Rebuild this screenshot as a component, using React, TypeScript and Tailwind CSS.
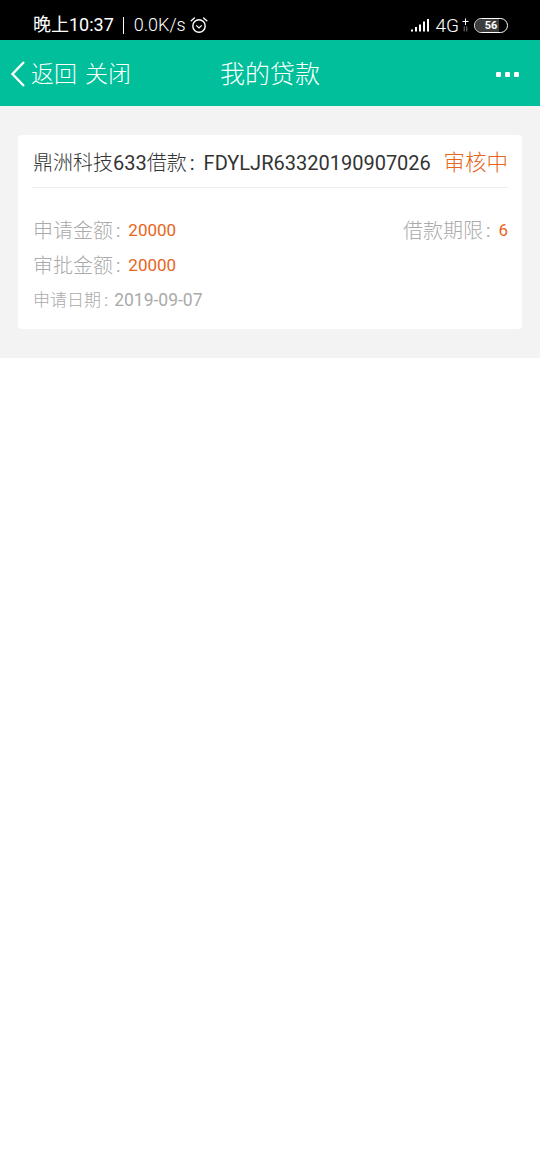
const font = { fontFamily: 'Roboto, "Noto Sans CJK SC", sans-serif' };

function AlarmIcon() {
    return (
        <svg width="18" height="18" viewBox="0 0 18 18" fill="none" stroke="#fff" strokeWidth="1.4">
            <circle cx="9" cy="10" r="6.2" />
            <path d="M6.2 9.4 9 12l2.8-2.6" strokeWidth="1.2" />
            <path d="M1.2 4.8 4.4 2M16.8 4.8 13.6 2" strokeLinecap="round" />
        </svg>
    );
}

function SignalIcon() {
    return (
        <svg width="20" height="14" viewBox="0 0 20 14" fill="#fff">
            <rect x="0" y="11.5" width="2" height="2" />
            <rect x="4" y="9" width="2" height="4.5" />
            <rect x="8" y="6.5" width="2" height="7" />
            <rect x="12" y="3.5" width="2" height="10" />
            <rect x="16" y="1" width="2" height="12.5" />
        </svg>
    );
}

function DataArrows() {
    return (
        <svg width="7" height="14" viewBox="0 0 7 14" fill="none" strokeWidth="1">
            <path d="M0.5 3.5h6M3.5 0.5v6.5" stroke="#fff" />
            <path d="M2.2 8.5v5M4.8 8.5v5" stroke="#777" />
        </svg>
    );
}

function Battery() {
    return (
        <div className="relative flex h-[15px] w-[34px] items-center justify-center overflow-hidden rounded-full border-[1.5px] border-white">
            <div className="absolute inset-y-0 left-0 w-[24px] bg-[#3d3d3d]" />
            <span className="relative text-[11px] font-bold leading-none text-white">56</span>
        </div>
    );
}

function Field({ label, value }: { label: string; value: string }) {
    return (
        <div className="flex items-center">
            <span className="text-[20px] font-light leading-none text-[#aaa]">{label}</span>
            <span className="ml-[3px] mr-[8px] text-[18px] leading-none text-[#aaa]">:</span>
            <span className="text-[17px] leading-none text-[#e8641b]">{value}</span>
        </div>
    );
}

export default function App() {
    return (
        <div className="min-h-[1170px] bg-white" style={font}>
            {/* status bar */}
            <div className="flex h-10 items-center justify-between bg-black pl-[33px] pr-[32px] pt-[10px] text-white">
                <div className="flex items-center">
                    <span className="text-[18px] leading-none">晚上10:37</span>
                    <span className="ml-[9px] h-[17px] w-px bg-white" />
                    <span className="ml-[10px] text-[18px] font-light leading-none">0.0K/s</span>
                    <span className="ml-[4px] flex"><AlarmIcon /></span>
                </div>
                <div className="flex items-center">
                    <SignalIcon />
                    <span className="ml-[4px] text-[19px] font-light leading-none">4G</span>
                    <span className="ml-[3px] flex"><DataArrows /></span>
                    <span className="ml-[5px] flex"><Battery /></span>
                </div>
            </div>

            {/* nav */}
            <div className="relative flex h-[66px] items-center bg-[#00bf9a] pl-[10px] pr-[21px] pt-[2px] text-white">
                <svg width="16" height="28" viewBox="0 0 16 28" fill="none" stroke="#fff" strokeWidth="2.4">
                    <path d="M14 2 2.5 14 14 26" />
                </svg>
                <span className="ml-[5px] text-[23px] font-light leading-none">返回</span>
                <span className="ml-[8px] text-[23px] font-light leading-none">关闭</span>
                <span className="absolute left-0 right-0 text-center text-[25px] font-light leading-none">我的贷款</span>
                <div className="ml-auto flex gap-[4px]">
                    <span className="h-[5px] w-[5px] rounded-[1px] bg-white" />
                    <span className="h-[5px] w-[5px] rounded-[1px] bg-white" />
                    <span className="h-[5px] w-[5px] rounded-[1px] bg-white" />
                </div>
            </div>

            {/* list */}
            <div className="bg-[#f3f3f3] px-[18px] py-[29px]">
                <div className="rounded-[4px] bg-white px-[14px] pb-[11px]">
                    <div className="flex h-[53px] items-center justify-between border-b border-[#eeeeee] pt-[4px]">
                        <div className="flex items-center whitespace-nowrap pl-px leading-none text-[#333]">
                            <span className="text-[20px] font-light">鼎洲科技</span>
                            <span className="text-[20px]">633</span>
                            <span className="text-[20px] font-light">借款</span>
                            <span className="ml-[3px] mr-[9px] text-[20px]">:</span>
                            <span className="text-[20px]">FDYLJR63320190907026</span>
                        </div>
                        <span className="whitespace-nowrap text-[21.5px] font-light leading-none text-[#e8641b]">审核中</span>
                    </div>
                    <div className="mt-[25px] flex h-[35px] items-center justify-between pl-px">
                        <Field label="申请金额" value="20000" />
                        <Field label="借款期限" value="6" />
                    </div>
                    <div className="flex h-[35px] items-center pl-px">
                        <Field label="审批金额" value="20000" />
                    </div>
                    <div className="flex h-[35px] items-center pl-px leading-none text-[#aaa]">
                        <span className="text-[17px] font-light">申请日期</span>
                        <span className="ml-[3px] mr-[6px] text-[17px]">:</span>
                        <span className="text-[17.5px]">2019-09-07</span>
                    </div>
                </div>
            </div>
        </div>
    );
}
